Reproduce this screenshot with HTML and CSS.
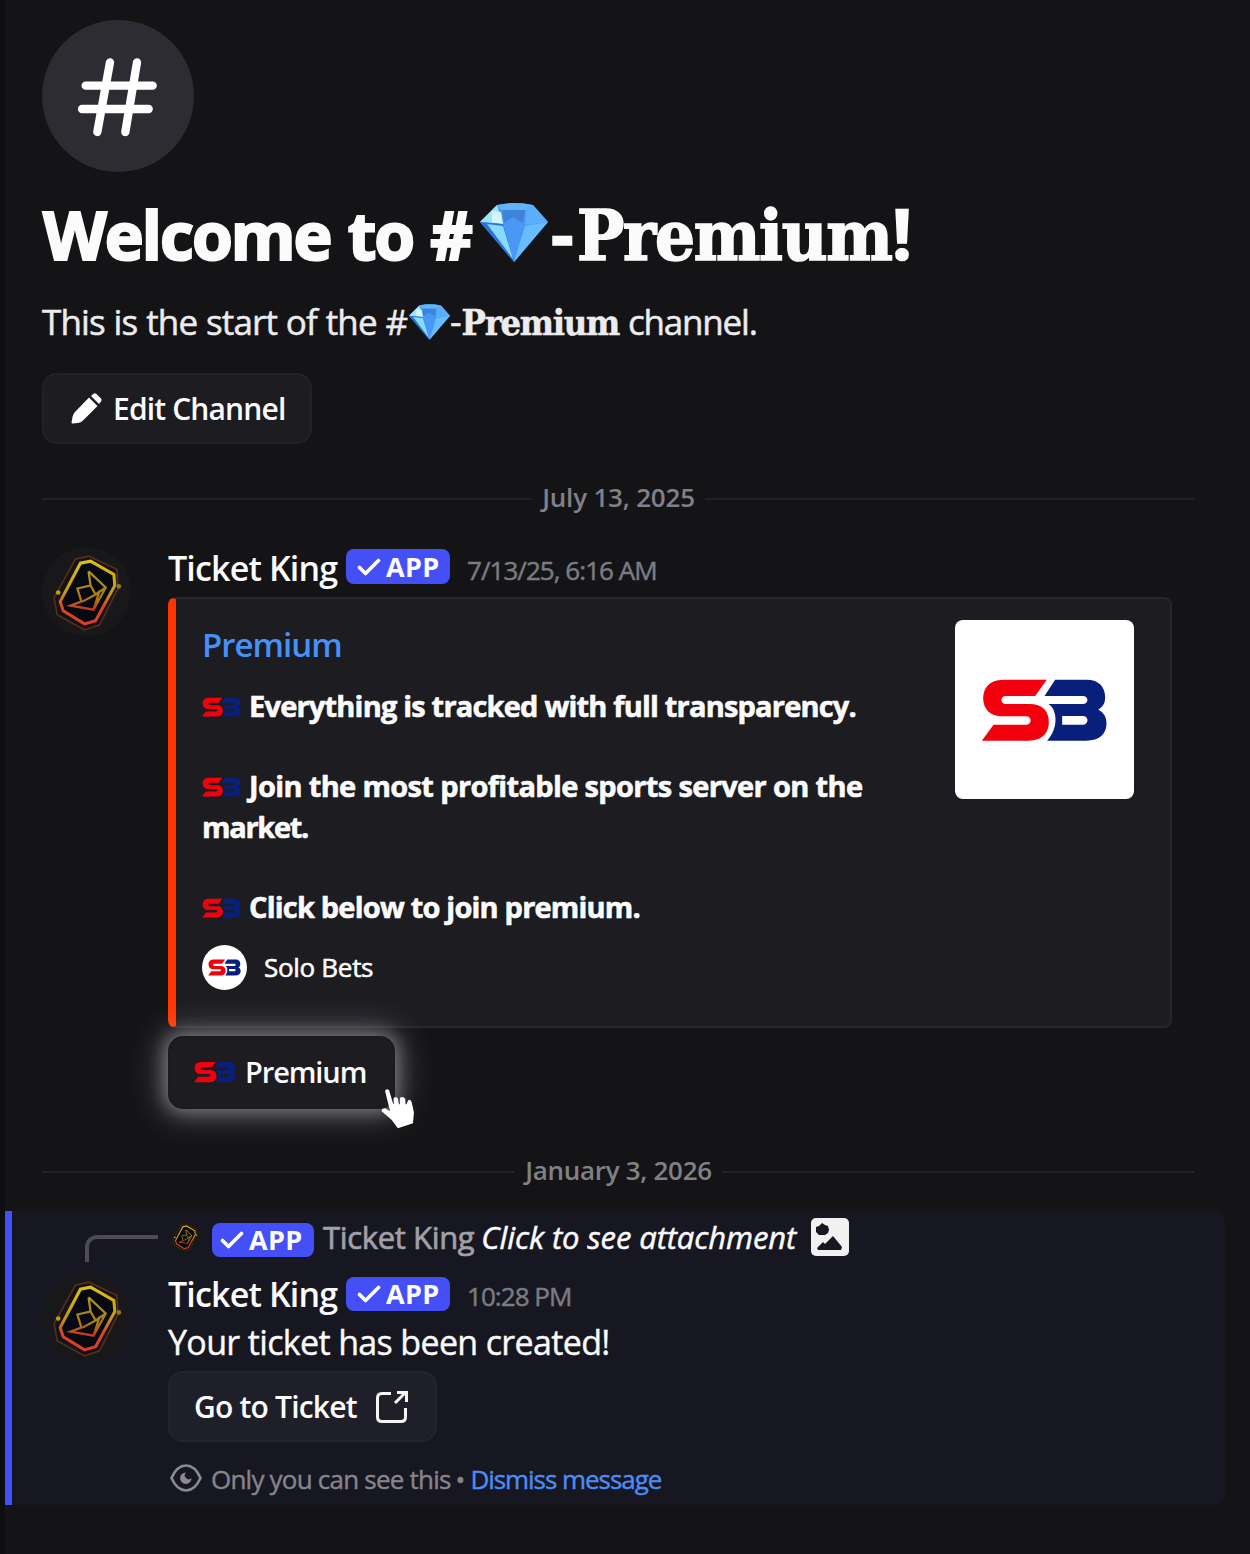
FILE: index.html
```
<!DOCTYPE html>
<html lang="en">
<head>
<meta charset="utf-8">
<title>Premium channel</title>
<link rel="stylesheet" href="styles.css">
</head>
<body>
<svg class="defs" width="0" height="0" aria-hidden="true">
  <symbol id="sb" viewBox="125 262 380 192">
    <path fill="#f3000f" d="M322 267H190C150 267 131 292 131 323C131 358 155 377 187 377H262C277 378 277 401 262 402H162L127 450H265C310 450 328 425 328 394C328 360 308 340 270 340H197C182 338 182 318 197 316H287Z"/>
    <path fill="#08207c" fill-rule="evenodd" d="M347 267H440C480 267 497 290 497 320C497 340 488 350 476 357C492 365 501 378 501 397C501 430 480 450 440 450H323C345 425 355 390 343 360C340 352 335 346 327 340H432C448 338 448 318 432 316H315ZM368 376V402H432C448 400 448 378 432 376Z"/>
  </symbol>
  <symbol id="gem" viewBox="0 0 68 59">
    <path fill="#4a98f5" d="M17 2Q34-2 53 2L68 19L34 59L0 19Z"/>
    <path fill="#9be4ff" d="M17 2L0 19L23 21Z"/>
    <path fill="#d3f3ff" d="M12 8L21 9L23 21L12 19Z"/>
    <path fill="#2f6fdc" d="M0 19L23 21L34 59Z"/>
    <path fill="#86dcff" d="M7 21L23 23L33 56Z"/>
    <path fill="#5fb4fb" d="M17 2Q34-2 53 2L45 8H22Z"/>
    <path fill="#3f82dc" d="M22 7H45L43 20L33 14L24 20Z"/>
    <path fill="#5aaefa" d="M53 2L68 19L45 22L46 8Z"/>
    <path fill="#66bdff" d="M68 19L34 59L45 23Z"/>
  </symbol>
  <symbol id="crest" viewBox="0 0 88 88">
    <circle cx="44" cy="44" r="44" fill="#18181b"/>
    <path d="M46 9L74 22L75 41L57 77L42 82L15 67L12 50L33 12Z" fill="#14131a" stroke="#54301a" stroke-width="1.6"/>
    <path d="M48 14L71 27L72 38L53 73L42 76L21 63L18 54L38 16Z" fill="#060812" stroke="url(#gold)" stroke-width="3"/>
    <path d="M46 24L63 40L51 62L28 58L39 54L35 41L48 38L53 47L40 54M48 38L46 24M53 47L63 40M51 62L57 43" fill="none" stroke="url(#gold2)" stroke-width="2.2"/>
    <circle cx="16" cy="45" r="2.3" fill="#c59a12"/><circle cx="76" cy="39" r="2.3" fill="#9b7419"/>
  </symbol>
  <linearGradient id="gold" gradientUnits="userSpaceOnUse" x1="0" y1="10" x2="0" y2="78"><stop offset="0" stop-color="#e0c414"/><stop offset=".5" stop-color="#c59a16"/><stop offset=".72" stop-color="#d8471f"/><stop offset="1" stop-color="#dc3a2c"/></linearGradient>
  <linearGradient id="gold2" gradientUnits="userSpaceOnUse" x1="0" y1="25" x2="0" y2="62"><stop offset="0" stop-color="#b3951c"/><stop offset=".7" stop-color="#a87a16"/><stop offset="1" stop-color="#c93222"/></linearGradient>
  <symbol id="check" viewBox="0 0 24 18"><path d="M2.5 9.5L8.5 15.5L21.500 2.500" fill="none" stroke="#fff" stroke-width="3.6" stroke-linecap="round" stroke-linejoin="round"/></symbol>
</svg>

<main class="channel">
  <div class="hash">
    <svg viewBox="126 60 456 456"><path d="M330 187L292 396M411 187L376 396M257 257H458M246 327H446" fill="none" stroke="#fff" stroke-width="25" stroke-linecap="round"/></svg>
  </div>

  <h1 class="title"><span class="m t1">Welcome to #</span><svg class="gem-lg"><use href="#gem"/></svg><span class="m t2">-</span><span class="m serif t3">Premium</span><span class="m t4">!</span></h1>
  <p class="intro"><span class="m i1">This is the start of the #</span><svg class="gem-sm"><use href="#gem"/></svg><span class="m i2">-</span><span class="m serif i3">Premium</span><span class="m i4">channel.</span></p>

  <button class="btn edit">
    <svg class="pencil" viewBox="0 0 31 31"><path fill="#fff" d="M18 4.500L26.500 13L12 27.500Q10 29.500 7 30L1.500 30.500Q.3 30.500.5 29.500L1.500 24Q2 21 4 19ZM20 3L22.500.8Q24-.2 25.500 1L30 5.500Q31.200 7 30 8.500L28 11Z"/></svg>
    <span class="m e1">Edit Channel</span>
  </button>

  <div class="divider first"><span class="m d1">July 13, 2025</span></div>

  <article class="message">
    <svg class="avatar"><use href="#crest"/></svg>
    <div class="body">
      <header class="head"><span class="m name">Ticket King</span><span class="badge"><svg><use href="#check"/></svg><span class="m app">APP</span></span><time class="m tm1">7/13/25, 6:16 AM</time></header>
      <section class="embed">
        <div class="embed-main">
          <h2 class="embed-title"><span class="m et">Premium</span></h2>
          <div class="embed-text">
            <p><svg class="sb-in"><use href="#sb"/></svg><span class="m l1">Everything is tracked with full transparency.</span></p>
            <p><svg class="sb-in"><use href="#sb"/></svg><span class="m l2">Join the most profitable sports server on the</span><br><span class="m l3">market.</span></p>
            <p><svg class="sb-in"><use href="#sb"/></svg><span class="m l4">Click below to join premium.</span></p>
          </div>
          <footer class="embed-foot"><span class="disc"><svg><use href="#sb"/></svg></span><span class="m f1">Solo Bets</span></footer>
        </div>
        <div class="thumb"><svg><use href="#sb"/></svg></div>
      </section>
      <button class="btn glow"><svg class="sb-btn"><use href="#sb"/></svg><span class="m b1">Premium</span>
        <svg class="cursor" viewBox="753 595 101 122"><path fill="#fff" d="M765 604Q769 594 777 602L789 642L792 642L790 626Q796 617 803 626L806 643L809 643L809 625Q817 618 825 627L826 643L829 643Q836 621 844 637L851 668L848 700L803 715L785 690L755 664Q754 655 765 655L780 664Z"/></svg>
      </button>
    </div>
  </article>

  <div class="divider second"><span class="m d2">January 3, 2026</span></div>
</main>

<section class="mention">
  <div class="reply">
    <span class="spine"></span>
    <svg class="avatar-xs"><use href="#crest"/></svg>
    <span class="badge"><svg><use href="#check"/></svg><span class="m app">APP</span></span>
    <span class="m r1">Ticket King</span>
    <em class="m r2">Click to see attachment</em>
    <svg class="image" viewBox="0 0 38 38"><rect width="38" height="38" rx="5" fill="#f1f1f2"/><path fill="#171721" d="M11 5L14 7L17 8L18 12L17 15L14 17L8 17L5 14L5 9L8 8ZM6 30L12 24L14 26L22 18L31 29L30 32H7Z"/></svg>
  </div>
  <article class="message">
    <svg class="avatar"><use href="#crest"/></svg>
    <div class="body">
      <header class="head"><span class="m name">Ticket King</span><span class="badge"><svg><use href="#check"/></svg><span class="m app">APP</span></span><time class="m tm2">10:28 PM</time></header>
      <p class="text"><span class="m y1">Your ticket has been created!</span></p>
      <button class="btn go"><span class="m g1">Go to Ticket</span><svg class="ext" viewBox="0 0 34 34"><path d="M16 3.500H7Q2.500 3.500 2.500 8V27Q2.500 31.500 7 31.500H26Q30.500 31.500 30.500 27V18M20 13L30 3M22 2.500H31.500V12" fill="none" stroke="#f5f5f5" stroke-width="3"/></svg></button>
      <footer class="note"><svg class="eye" viewBox="0 0 32 28"><path d="M1.500 14Q7 1.500 16 1.500T30.500 14Q25 26.500 16 26.500T1.500 14Z" fill="none" stroke="#8b8b91" stroke-width="2.600"/><path fill="#8b8b91" d="M16 8.500A2.800 2.800 0 0 0 21.500 14A5.700 5.700 0 1 1 16 8.500Z"/></svg><span class="m n1">Only you can see this</span><span class="m n2">•</span><a class="m n3">Dismiss message</a></footer>
    </div>
  </article>
</section>
</body>
</html>
```
FILE: styles.css
```
* { box-sizing: border-box; margin: 0; padding: 0; }
body {
  height: 1554px;
  overflow: hidden;
  background: #141416;
  border-left: 5px solid #0e0e10;
  color: #fbfbfb;
  font-family: "Open Sans", "Noto Sans", sans-serif;
}
.defs { display: block; position: absolute; }
svg { display: block; flex: none; }
.m { white-space: nowrap; }
.serif { font-family: "DejaVu Serif Condensed", "DejaVu Serif", serif; font-stretch: 90%; font-weight: 700; }

.channel { padding: 20px 55px 0 37px; }
.hash { width: 152px; height: 152px; border-radius: 50%; background: #2c2c32; }
.hash svg { width: 152px; height: 152px; }

.title { display: flex; align-items: baseline; margin-top: 21px; height: 79px; font-size: 70px; line-height: 80px; font-weight: 700; -webkit-text-stroke: 1.6px #fbfbfb; }
.t1 { width: 433px; margin-left: 1px; font-size: 66px; letter-spacing: -2px; word-spacing: 2px; -webkit-text-stroke-width: 2.2px; }
.t2 { width: 26px; }
.t3 { width: 315px; letter-spacing: -1.3px; }
.gem-lg { width: 68px; height: 59px; align-self: flex-start; margin: 10px 3px 0 4px; }
.intro { display: flex; align-items: baseline; margin-top: 28px; height: 43px; font-size: 36px; line-height: 44px; color: #ececee; -webkit-text-stroke: .5px #ececee; }
.i1 { width: 365px; font-size: 35px; letter-spacing: -.85px; word-spacing: .5px; }
.i3 { letter-spacing: -1.3px; }
.gem-sm { width: 41px; height: 36px; align-self: flex-start; margin: 4px 0 0 2px; }
.i4 { margin-left: 9px; font-size: 35px; letter-spacing: -1.2px; }

.btn { display: flex; align-items: center; height: 71px; border: 2px solid #222228; border-radius: 15px; background: #1c1c21; color: #fbfbfb; font: 600 30px/40px "Open Sans", "Noto Sans", sans-serif; }
.edit { width: 270px; margin-top: 30px; padding: 0 0 1px 27px; gap: 11px; }
.e1 { padding-top: 2px; letter-spacing: -.85px; }
.pencil { width: 31px; height: 31px; }

.divider { display: flex; align-items: center; gap: 10px; height: 30px; font-size: 26px; line-height: 30px; font-weight: 600; color: #808086; }
.divider::before, .divider::after { content: ""; flex: 1; height: 2px; margin-top: 4px; background: #222226; }
.d1 { letter-spacing: -.2px; }
.d2 { letter-spacing: -.3px; }
.first { margin-top: 38px; }
.second { margin-top: 46px; }

.message { display: flex; }
.avatar { width: 89px; height: 89px; margin-right: 37px; }
.channel .message { margin-top: 35px; }
.body { flex: none; width: 1004px; }
.head { display: flex; align-items: baseline; height: 50px; }
.name { width: 171px; font-size: 34px; line-height: 42px; font-weight: 600; letter-spacing: -.85px; }
.badge { display: flex; align-items: center; flex: none; width: 104px; height: 35px; padding-left: 11px; gap: 5px; align-self: flex-start; border-radius: 8px; background: #4450f5; font-size: 27px; line-height: 34px; font-weight: 700; letter-spacing: .3px; }
.badge svg { width: 24px; height: 18px; }
.head .badge { margin: 2px 17px 0 7px; }
time { align-self: flex-start; margin-top: 5px; font-size: 26px; line-height: 36px; color: #7b7b81; letter-spacing: -.95px; -webkit-text-stroke: .5px #7b7b81; }

.embed { display: flex; justify-content: space-between; height: 431px; padding: 21px 36px 0 26px; border: 2px solid #26262b; border-left: 8px solid #fc3503; border-radius: 8px; background: #1c1c21; }
.embed-title { height: 44px; margin-top: 3px; font-size: 33px; line-height: 44px; font-weight: 600; letter-spacing: -1px; color: #4790f8; }
.embed-text { display: grid; gap: 40.2px; margin-top: 19px; font-size: 29px; line-height: 40.2px; font-weight: 700; -webkit-text-stroke: .6px #fbfbfb; }
.embed-text p { min-height: 40.2px; }
.l1 { letter-spacing: -.8px; }
.l2 { letter-spacing: -.65px; }
.l3 { letter-spacing: -1.3px; }
.l4 { letter-spacing: -.8px; }
.sb-in { display: inline-block; width: 39px; height: 22px; margin-right: 8px; vertical-align: -1px; }
.embed-foot { display: flex; align-items: center; gap: 17px; margin-top: 17px; font-size: 26px; line-height: 45px; }
.f1 { padding-top: 1px; letter-spacing: -.3px; -webkit-text-stroke: .6px #fbfbfb; }
.disc { display: grid; place-items: center; width: 45px; height: 45px; border-radius: 50%; background: #fff; }
.disc svg { width: 33px; height: 17px; }
.thumb { display: grid; place-items: center; width: 179px; height: 179px; border-radius: 8px; background: #fff; }
.thumb svg { width: 127px; height: 64px; }

.glow { position: relative; width: 227px; height: 73px; margin-top: 8px; padding: 0 0 2px 24px; gap: 9px; border-color: #1a1a1f; box-shadow: 0 0 18px 3px rgba(235,235,245,.38), 0 0 34px 9px rgba(235,235,245,.22); }
.b1 { padding-top: 1px; font-size: 29px; letter-spacing: -1.1px; }
.sb-btn { width: 42px; height: 24px; }
.cursor { position: absolute; left: 211px; top: 50px; width: 34px; height: 41px; }

.mention { width: 1220px; height: 294px; margin-top: 26px; padding-left: 30px; border-left: 7px solid #4450f5; border-radius: 0 10px 10px 0; background: #171721; }
.reply { display: flex; align-items: center; height: 62px; padding-bottom: 11px; font-size: 31px; line-height: 40px; }
.spine { width: 73px; height: 27px; margin: 24px 0 0 43px; align-self: flex-start; border: solid #4c4c52; border-width: 4px 0 0 4px; border-top-left-radius: 12px; }
.avatar-xs { width: 32px; height: 32px; margin: 0 11px 0 11px; }
.reply .badge { width: 102px; height: 34px; margin: 12px 9px 0 0; padding-left: 8px; }
.r1 { color: #a0a0a6; margin-right: 7px; letter-spacing: -.35px; -webkit-text-stroke: .7px #a0a0a6; }
.r2 { margin-right: 15px; letter-spacing: -.1px; -webkit-text-stroke: .5px #fbfbfb; }
.image { width: 38px; height: 38px; }
.mention .head .badge { height: 34px; margin-top: 4px; }
.text { height: 46px; margin-top: -4px; font-size: 34px; line-height: 46px; letter-spacing: -.65px; -webkit-text-stroke: .4px #fbfbfb; }
.go { width: 269px; margin-top: 6px; padding: 0 0 0 24px; gap: 18px; background: #1f1f29; border-color: #24242d; }
.g1 { padding-top: 1px; letter-spacing: -.8px; }
.ext { width: 34px; height: 34px; }
.note { display: flex; align-items: center; margin-top: 19px; height: 36px; font-size: 26px; line-height: 36px; color: #85858b; -webkit-text-stroke: .4px; }
.eye { width: 32px; height: 28px; margin: 0 9px 2px 2px; }
.n1 { letter-spacing: -.78px; }
.n2 { margin: 0 5px; }
.n3 { color: #4b8cf5; letter-spacing: -1.05px; }
```
